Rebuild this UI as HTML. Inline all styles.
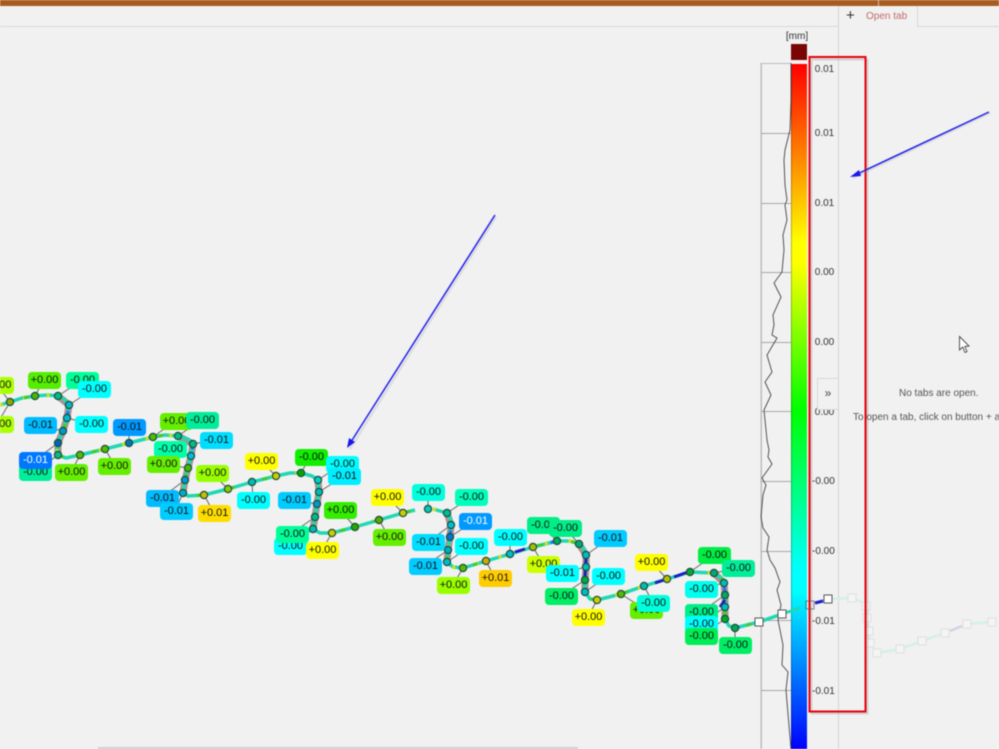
<!DOCTYPE html>
<html><head><meta charset="utf-8"><style>
html,body{margin:0;padding:0;width:999px;height:749px;overflow:hidden;background:#f1f1f1}
body{position:relative;font-family:"Liberation Sans",sans-serif}
.a{position:absolute}
svg{position:absolute;left:0;top:0}
#w{position:absolute;left:0;top:0;width:999px;height:749px;overflow:hidden;filter:blur(.45px)}
b{position:absolute;width:33px;height:17px;line-height:17px;text-align:center;font-weight:normal;font-size:11px;border-radius:4px;color:#111;white-space:nowrap;overflow:hidden}
.t{position:absolute;left:812px;width:26px;font-size:10px;line-height:12px;color:#333;white-space:nowrap}
</style></head><body><div id="w">
<div class="a" style="left:0;top:0;width:999px;height:6px;background:#a85c20"></div>
<div class="a" style="left:878px;top:0;width:1px;height:6px;background:#d8b89a"></div>
<div class="a" style="left:0;top:26px;width:838px;height:1px;background:#d8d8d8"></div>
<div class="a" style="left:917px;top:26px;width:82px;height:1px;background:#d8d8d8"></div>
<div class="a" style="left:917px;top:6px;width:1px;height:20px;background:#d8d8d8"></div>
<div class="a" style="left:838px;top:6px;width:1px;height:743px;background:#d4d4d4"></div>
<div class="a" style="left:846px;top:8px;font-size:15px;line-height:16px;color:#333">+</div>
<div class="a" style="left:866px;top:11px;font-size:10px;line-height:12px;color:#c46a6a">Open tab</div>
<div class="a" style="left:784px;top:31px;width:26px;text-align:center;font-size:10px;line-height:12px;color:#333">[mm]</div>
<div class="a" style="left:791px;top:44px;width:16px;height:16px;background:#7a0505"></div>
<div class="a" style="left:98px;top:747px;width:480px;height:2px;background:#d0d0d0"></div>

<svg width="999" height="749" viewBox="0 0 999 749">
<defs><linearGradient id="g" x1="0" y1="0" x2="0" y2="1">
<stop offset="0" stop-color="#f00"/><stop offset=".26" stop-color="#ff0"/><stop offset=".29" stop-color="#ff0"/><stop offset=".505" stop-color="#0f0"/><stop offset=".74" stop-color="#0ff"/><stop offset=".77" stop-color="#0ff"/><stop offset="1" stop-color="#00f"/></linearGradient>
<polyline id="p1" points="0,405 10,402 22,398 35,396 48,395 58,396 65,400 69,405 67,418 63,431 58,443 57,450 58,455 66,458 80,455 105,449 129,443 153,437 165,435 178,436 188,439 193,444 191,456 188,468 185,480 183,493 188,496 204,495 228,489 252,482 276,476 290,473 301,473 312,476 318,480 319,492 317,504 315,517 313,529 320,533 332,533 355,527 379,520 403,513 415,510"/>
<polyline id="p2" points="433,509 447,513 451,520 451,525 450,537 448,550 447,562 453,567 463,568 486,561 510,554 533,547 557,541 570,541 579,544 585,550 586,555 586,567 585,580 585,592 590,599 597,600 621,594 644,586 667,579 690,572 714,573 721,578 724,583 725,595 725,607 725,619 729,626 735,628 759,622 782,614"/>
</defs>
<rect x="760.5" y="63" width="1.5" height="686" fill="#bdbdbd"/>
<rect x="761" y="63" width="30" height="1" fill="#bdbdbd"/>
<g fill="#a8a8a8"><rect x="761" y="133" width="46" height="1"/><rect x="761" y="203" width="46" height="1"/><rect x="761" y="272" width="46" height="1"/><rect x="761" y="342" width="46" height="1"/><rect x="761" y="411" width="46" height="1"/><rect x="761" y="481" width="46" height="1"/><rect x="761" y="551" width="46" height="1"/><rect x="761" y="620" width="46" height="1"/><rect x="761" y="690" width="46" height="1"/></g>
<rect x="791" y="64" width="16" height="685" fill="url(#g)"/>
<rect x="791" y="64" width="1" height="685" fill="#000" opacity=".25"/>
<polyline fill="none" stroke="#444" stroke-width=".9" points="791,63 791,100 790,130 785,150 784,160 785,185 787,200 785,205 787,220 783,235 784,250 782,272 774,283 781,297 773,315 774,325 772,335 777,338 767,355 772,372 765,382 771,395 764,410 767,440 769,450 768,457 772,464 762,478 766,485 763,495 761,517 763,528 769,537 767,550 770,560 775,568 780,582 777,590 781,605 778,620 783,645 782,665 788,672 786,690 791,749"/>

<!-- faded continuation -->
<polyline fill="none" stroke="#d3efe9" stroke-width="2.5" stroke-linejoin="round" points="828,599 852,598 862,602 866,606 867,618 868,631 870,643 877,653 900,649 922,641 945,633 967,624 992,622"/>
<polyline fill="none" stroke="#d3d1e6" stroke-width="2.5" points="950,631 962,626"/>
<g fill="#f4f4f4" stroke="#e0e0e0" stroke-width="1"><rect x="848" y="594" width="8" height="8"/><rect x="862" y="602" width="8" height="8"/><rect x="863" y="614" width="8" height="8"/><rect x="865" y="627" width="8" height="8"/><rect x="866" y="639" width="8" height="8"/><rect x="873" y="649" width="8" height="8"/><rect x="896" y="645" width="8" height="8"/><rect x="918" y="637" width="8" height="8"/><rect x="941" y="629" width="8" height="8"/><rect x="963" y="620" width="8" height="8"/><rect x="988" y="618" width="8" height="8"/></g>

<rect x="810" y="58" width="56" height="654" fill="none" stroke="#999" stroke-width="2" opacity=".35" transform="translate(1.5,1.5)"/>
<rect x="809.5" y="57" width="56" height="654.5" fill="none" stroke="#e8000c" stroke-width="2"/>

<!-- leaders -->
<g stroke="#666" stroke-width="1" fill="none">
<path d="M-3 385L10 402M-3 424L10 402M44 379L35 396M82 380L58 396M93 389L69 405M90 424L67 418M39 425L63 431M129 427L129 443M35 460L58 443M35 472L58 455M71 472L80 455M115 466L105 449M175 421L153 437M201 420L178 436M215 440L193 444M169 449L191 456M163 464L188 468M212 473L228 489M161 498L185 480M175 511L183 493M214 513L204 495"/>
<path d="M253 500L252 482M261 461L276 476M310 457L301 473M342 464L318 480M344 476L319 492M293 500L317 504M291 534L315 517M290 546L313 529M322 550L332 533M340 510L355 527M389 537L379 520M387 497L403 513M428 492L428 509M471 497L447 513M474 521L450 537M428 542L451 525M471 546L447 562M425 566L448 550M453 585L463 568M495 578L486 561"/>
<path d="M510 537L510 554M543 564L533 547M542 525L557 541M565 528L579 544M610 538L586 555M562 573L586 567M608 576L585 592M561 596L585 580M588 617L597 600M646 610L621 594M653 603L644 586M651 562L667 579M714 555L690 572M738 568L714 573M701 589L724 583M701 612L725 595M701 624L725 607M701 636L725 619M735 645L735 628"/>
</g>

<!-- curve -->
<g fill="none" stroke-linejoin="round">
<path stroke="#b08f8f" stroke-width="7" d="M58 396L69 405L67 418L63 431L58 443L58 455M178 436L193 444L191 456L188 468L185 480L183 493M318 480L319 492L317 504L315 517L313 529M447 513L451 525L450 537L448 550L447 562M579 544L586 555L586 567L585 580L585 592M714 573L724 583L725 595L725 607L725 619"/>
<use href="#p1" stroke="#1fd8b4" stroke-width="3.5"/>
<use href="#p2" stroke="#1fd8b4" stroke-width="3.5"/>
<use href="#p1" stroke="#dede00" stroke-width="3" stroke-dasharray="3 21"/>
<use href="#p2" stroke="#dede00" stroke-width="3" stroke-dasharray="3 21"/>
<use href="#p1" stroke="#2a6bff" stroke-width="3" stroke-dasharray="4 43" stroke-dashoffset="14"/>
<use href="#p2" stroke="#2a6bff" stroke-width="3" stroke-dasharray="4 43" stroke-dashoffset="14"/>
<use href="#p1" stroke="#44cc22" stroke-width="3" stroke-dasharray="5 29" stroke-dashoffset="9"/>
<use href="#p2" stroke="#44cc22" stroke-width="3" stroke-dasharray="5 29" stroke-dashoffset="9"/>
<path stroke="#1c1ccc" stroke-width="3" d="M515 552L525 549M586 558L585 576M655 583L664 580M674 577L688 572M720 607L725 600"/>
<path stroke="#1fd8b4" stroke-width="3" d="M782 614L800 608"/>
<path stroke="#1c1ccc" stroke-width="3" d="M815 603L823 601"/>
<path stroke="#1fd8b4" stroke-width="3" d="M823 601L828 599"/>
</g>

<!-- nodes -->
<g stroke="#1d4d3a" stroke-width="1.2">
<circle cx="10" cy="402" r="3.6" fill="#8a0"/><circle cx="35" cy="396" r="3.6" fill="#4b0"/><circle cx="58" cy="396" r="3.6" fill="#0b8"/><circle cx="69" cy="405" r="3.6" fill="#0bc"/><circle cx="67" cy="418" r="3.6" fill="#0bc"/><circle cx="63" cy="431" r="3.6" fill="#09c"/><circle cx="58" cy="443" r="3.6" fill="#06b"/><circle cx="58" cy="455" r="3.6" fill="#0b8"/><circle cx="80" cy="455" r="3.6" fill="#5b0"/><circle cx="105" cy="449" r="3.6" fill="#5b0"/><circle cx="129" cy="443" r="3.6" fill="#07b"/><circle cx="153" cy="437" r="3.6" fill="#5b0"/><circle cx="178" cy="436" r="3.6" fill="#0b8"/><circle cx="193" cy="444" r="3.6" fill="#0b8"/><circle cx="191" cy="456" r="3.6" fill="#0bd"/><circle cx="188" cy="468" r="3.6" fill="#4b0"/><circle cx="185" cy="480" r="3.6" fill="#09c"/><circle cx="183" cy="493" r="3.6" fill="#0ac"/><circle cx="204" cy="495" r="3.6" fill="#cb0"/><circle cx="228" cy="489" r="3.6" fill="#8c0"/>
<circle cx="252" cy="482" r="3.6" fill="#0bb"/><circle cx="276" cy="476" r="3.6" fill="#cc0"/><circle cx="301" cy="473" r="3.6" fill="#0a0"/><circle cx="318" cy="480" r="3.6" fill="#0cc"/><circle cx="319" cy="492" r="3.6" fill="#0bb"/><circle cx="317" cy="504" r="3.6" fill="#09c"/><circle cx="315" cy="517" r="3.6" fill="#0b8"/><circle cx="313" cy="529" r="3.6" fill="#0bb"/><circle cx="332" cy="533" r="3.6" fill="#cc0"/><circle cx="355" cy="527" r="3.6" fill="#2a0"/><circle cx="379" cy="520" r="3.6" fill="#5a0"/><circle cx="403" cy="513" r="3.6" fill="#cc0"/><circle cx="428" cy="509" r="3.6" fill="#0cb"/><circle cx="447" cy="513" r="3.6" fill="#0b9"/><circle cx="451" cy="525" r="3.6" fill="#0bc"/><circle cx="450" cy="537" r="3.6" fill="#07c"/><circle cx="448" cy="550" r="3.6" fill="#0ac"/><circle cx="447" cy="562" r="3.6" fill="#0bc"/><circle cx="463" cy="568" r="3.6" fill="#5b0"/><circle cx="486" cy="561" r="3.6" fill="#ca0"/>
<circle cx="510" cy="554" r="3.6" fill="#0bc"/><circle cx="533" cy="547" r="3.6" fill="#ab0"/><circle cx="557" cy="541" r="3.6" fill="#0a6"/><circle cx="579" cy="544" r="3.6" fill="#0a7"/><circle cx="586" cy="555" r="3.6" fill="#0bc"/><circle cx="586" cy="567" r="3.6" fill="#0bb"/><circle cx="585" cy="580" r="3.6" fill="#0a4"/><circle cx="585" cy="592" r="3.6" fill="#0bc"/><circle cx="597" cy="600" r="3.6" fill="#cc0"/><circle cx="621" cy="594" r="3.6" fill="#5b0"/><circle cx="644" cy="586" r="3.6" fill="#0bb"/><circle cx="667" cy="579" r="3.6" fill="#bb0"/><circle cx="690" cy="572" r="3.6" fill="#0a3"/><circle cx="714" cy="573" r="3.6" fill="#0a7"/><circle cx="724" cy="583" r="3.6" fill="#0bb"/><circle cx="725" cy="595" r="3.6" fill="#0a6"/><circle cx="725" cy="607" r="3.6" fill="#0bc"/><circle cx="725" cy="619" r="3.6" fill="#0a3"/><circle cx="735" cy="628" r="3.6" fill="#0a5"/>
</g>
<g fill="#fff" stroke="#555" stroke-width="1"><rect x="755" y="618" width="8" height="8"/><rect x="778" y="610" width="8" height="8"/><rect x="806" y="601" width="8" height="8" fill="none" stroke-opacity=".7"/><rect x="824" y="595" width="8" height="8"/></g>
</svg>

<div class="t" style="top:64px">&nbsp;0.01</div><div class="t" style="top:128px">&nbsp;0.01</div><div class="t" style="top:198px">&nbsp;0.01</div><div class="t" style="top:267px">&nbsp;0.00</div><div class="t" style="top:337px">&nbsp;0.00</div><div class="t" style="top:407px">&nbsp;0.00</div><div class="t" style="top:476px">-0.00</div><div class="t" style="top:546px">-0.00</div><div class="t" style="top:616px">-0.01</div><div class="t" style="top:686px">-0.01</div>
<div class="a" style="left:817px;top:378px;width:21px;height:32px;background:#f1f1f1;border:1px solid #d8d8d8;border-right:0;box-sizing:border-box;text-align:center;font-size:12px;line-height:29px;color:#444">»</div>
<div class="a" style="left:899px;top:388px;font-size:10px;line-height:12px;color:#555;white-space:nowrap">No tabs are open.</div>
<div class="a" style="left:853px;top:412px;font-size:10px;line-height:12px;color:#555;white-space:nowrap">To open a tab, click on button + above.</div>

<!-- labels -->
<b style="left:-19px;top:377px;background:#af0">+0.00</b>
<b style="left:-19px;top:416px;background:#af0">+0.00</b>
<b style="left:28px;top:372px;background:#5e0">+0.00</b>
<b style="left:66px;top:372px;background:#0f9">-0.00</b>
<b style="left:78px;top:381px;background:#0ff">-0.00</b>
<b style="left:75px;top:416px;background:#0ff">-0.00</b>
<b style="left:24px;top:417px;background:#0bf">-0.01</b>
<b style="left:113px;top:419px;background:#09f">-0.01</b>
<b style="left:19px;top:464px;background:#0e9">-0.00</b>
<b style="left:19px;top:452px;background:#07f;color:#fff">-0.01</b>
<b style="left:55px;top:464px;background:#6e0">+0.00</b>
<b style="left:98px;top:458px;background:#6e0">+0.00</b>
<b style="left:160px;top:413px;background:#6e0">+0.00</b>
<b style="left:186px;top:412px;background:#0e9">-0.00</b>
<b style="left:200px;top:432px;background:#0df">-0.01</b>
<b style="left:154px;top:441px;background:#0fa">-0.00</b>
<b style="left:147px;top:456px;background:#6e0">+0.00</b>
<b style="left:196px;top:465px;background:#9f0">+0.00</b>
<b style="left:146px;top:490px;background:#0bf">-0.01</b>
<b style="left:160px;top:503px;background:#0cf">-0.01</b>
<b style="left:198px;top:505px;background:#fd0">+0.01</b>
<b style="left:245px;top:453px;background:#ff0">+0.00</b>
<b style="left:295px;top:449px;background:#1e0">-0.00</b>
<b style="left:326px;top:456px;background:#0ff">-0.00</b>
<b style="left:328px;top:468px;background:#0ef">-0.01</b>
<b style="left:237px;top:492px;background:#0ff">-0.00</b>
<b style="left:278px;top:492px;background:#0cf">-0.01</b>
<b style="left:324px;top:502px;background:#3e0">+0.00</b>
<b style="left:274px;top:538px;background:#0ff">-0.00</b>
<b style="left:276px;top:526px;background:#0f9">-0.00</b>
<b style="left:306px;top:542px;background:#ff0">+0.00</b>
<b style="left:371px;top:489px;background:#ff0">+0.00</b>
<b style="left:373px;top:529px;background:#6e0">+0.00</b>
<b style="left:412px;top:484px;background:#0fd">-0.00</b>
<b style="left:455px;top:489px;background:#0fb">-0.00</b>
<b style="left:459px;top:513px;background:#09f;color:#fff">-0.01</b>
<b style="left:412px;top:534px;background:#0df">-0.01</b>
<b style="left:455px;top:538px;background:#0ff">-0.00</b>
<b style="left:409px;top:558px;background:#0cf">-0.01</b>
<b style="left:437px;top:577px;background:#9f0">+0.00</b>
<b style="left:479px;top:570px;background:#fc0">+0.01</b>
<b style="left:494px;top:529px;background:#0ff">-0.00</b>
<b style="left:527px;top:556px;background:#cf0">+0.00</b>
<b style="left:527px;top:517px;background:#0e8">-0.00</b>
<b style="left:549px;top:520px;background:#0e8">-0.00</b>
<b style="left:594px;top:530px;background:#0cf">-0.01</b>
<b style="left:546px;top:565px;background:#0ff">-0.01</b>
<b style="left:592px;top:568px;background:#0ff">-0.00</b>
<b style="left:545px;top:588px;background:#0e6">-0.00</b>
<b style="left:572px;top:609px;background:#ff0">+0.00</b>
<b style="left:635px;top:554px;background:#ff0">+0.00</b>
<b style="left:630px;top:602px;background:#6e0">+0.00</b>
<b style="left:637px;top:595px;background:#0fd">-0.00</b>
<b style="left:698px;top:547px;background:#0e4">-0.00</b>
<b style="left:722px;top:560px;background:#0e9">-0.00</b>
<b style="left:685px;top:581px;background:#0fe">-0.00</b>
<b style="left:685px;top:604px;background:#0e8">-0.00</b>
<b style="left:685px;top:616px;background:#0ff">-0.00</b>
<b style="left:685px;top:628px;background:#0e5">-0.00</b>
<b style="left:719px;top:637px;background:#0e6">-0.00</b>

<svg width="999" height="749" viewBox="0 0 999 749">
<g stroke="#888" stroke-width="2" opacity=".2" fill="none"><path d="M496 217L350 449M990 113L853 178"/></g>
<g stroke="#2222ee" stroke-width="1.5" fill="none"><path d="M495 215L349 445M989 112L853 176"/></g>
<path d="M347 448L349 438L355 442Z" fill="#1818ee"/>
<path d="M850 177L859 170L861 176Z" fill="#1818ee"/>
<path d="M959.5 336.5V350L962.7 347L965 352.5L967 351.5L964.8 346.5L969 346Z" fill="#fff" stroke="#444" stroke-width=".9"/>
</svg>
</div></body></html>
